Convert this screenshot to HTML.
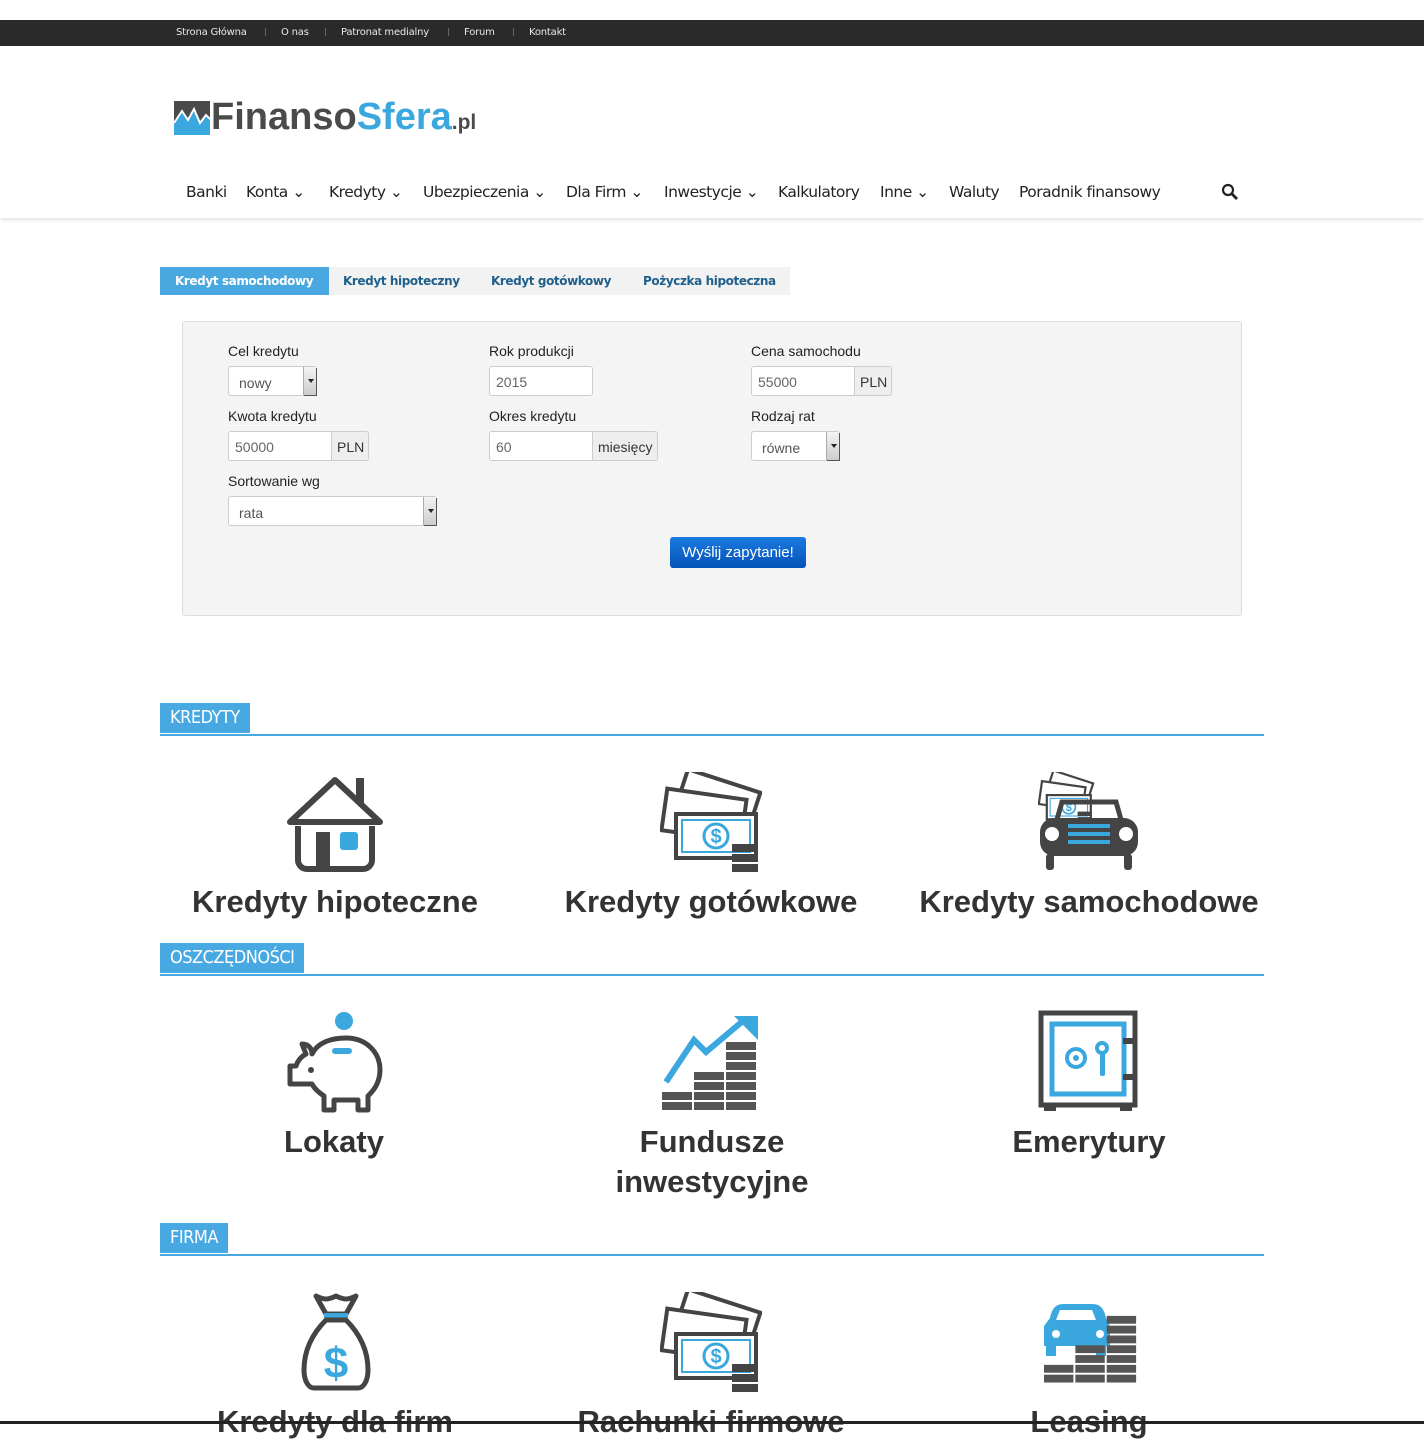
<!DOCTYPE html>
<html><head><meta charset="utf-8"><style>
*{margin:0;padding:0;box-sizing:border-box}
body{width:1424px;height:1424px;overflow:hidden;background:#fff;font-family:"Liberation Sans",sans-serif;position:relative}
.abs{position:absolute}
.top{top:20px;left:0;width:1424px;height:26px;background:#2a2a2a;color:#e8e8e8;font-size:10px;font-family:"DejaVu Sans",sans-serif;letter-spacing:-.2px}
.top span{position:absolute;top:7px}
.top i{position:absolute;top:8px;width:1px;height:8px;background:#666}
.hdr{top:46px;left:0;width:1424px;height:172px;background:#fff;box-shadow:0 2px 4px rgba(0,0,0,.12)}
.nav span{position:absolute;top:183px;font-size:15.5px;color:#222;font-family:"DejaVu Sans",sans-serif;letter-spacing:-.5px}
.tabs{top:267px;left:160px;width:630px;height:28px;background:#f2f2f2}
.tab{position:absolute;top:267px;height:28px;line-height:28px;font-size:12px;font-weight:bold;color:#1f5f8b;font-family:"DejaVu Sans",sans-serif;letter-spacing:-.4px}
.box{top:321px;left:182px;width:1060px;height:295px;background:#f4f4f4;border:1px solid #ddd;border-radius:3px}
.lbl{position:absolute;font-size:14px;color:#222}
.inp{position:absolute;height:30px;background:#fff;border:1px solid #ccc;border-radius:3px;font-size:14px;color:#666;padding:7px 6px}
.add{position:absolute;height:30px;background:#eee;border:1px solid #ccc;border-radius:0 3px 3px 0;font-size:14px;color:#333;padding:7px 5px}
.sel{position:absolute;height:30px;background:#fff;border:1px solid #ccc;border-radius:3px;font-size:14px;color:#555;padding:8px 10px}
.sel b{position:absolute;right:0;top:0;width:13px;height:28px;background:linear-gradient(#f4f4f4,#ccc);border-left:1px solid #aaa;box-shadow:1px 1px 0 #555}
.sel b:after{content:"";position:absolute;left:4px;top:12px;border:3px solid transparent;border-top:4px solid #222}
.btn{top:537px;left:670px;width:136px;height:31px;background:linear-gradient(#1a7be0,#0552b8);border-radius:3px;color:#fff;font-size:15px;text-align:center;line-height:31px}
.sec{position:absolute;left:160px;height:30px;background:#48a9e2;color:#fff;font-size:18px;line-height:30px;padding:0 10px;font-family:"DejaVu Sans Condensed","DejaVu Sans",sans-serif;letter-spacing:-.5px}
.line{position:absolute;left:160px;width:1104px;height:2px;background:#48a9e2}
.t{position:absolute;width:400px;text-align:center;font-size:31px;font-weight:bold;color:#333;line-height:40px}
svg{position:absolute}
</style></head><body>
<div class="abs top">
<span style="left:176px">Strona Główna</span><i style="left:265px"></i>
<span style="left:281px">O nas</span><i style="left:325px"></i>
<span style="left:341px">Patronat medialny</span><i style="left:448px"></i>
<span style="left:464px">Forum</span><i style="left:513px"></i>
<span style="left:529px">Kontakt</span>
</div>
<div class="abs hdr"></div>
<svg style="left:174px;top:101px" width="36" height="34" viewBox="0 0 36 34"><rect width="36" height="34" fill="#4a4a4a"/><path d="M0 34V22L8 10l6 9 6-11 6 14 6-8 4 4v16z" fill="#3aa8df"/><path d="M0 22L8 10l6 9 6-11 6 14 6-8 4 4" fill="none" stroke="#fff" stroke-width="2"/></svg>
<div class="abs" style="left:211px;top:96px;font-size:38px;font-weight:bold;letter-spacing:0;color:#4a4a4a">Finanso<span style="color:#3aa8df">Sfera</span><span style="font-size:21px">.pl</span></div>
<div class="nav">
<span style="left:186px">Banki</span><span style="left:246px">Konta ⌄</span><span style="left:329px">Kredyty ⌄</span><span style="left:423px">Ubezpieczenia ⌄</span><span style="left:566px">Dla Firm ⌄</span><span style="left:664px">Inwestycje ⌄</span><span style="left:778px">Kalkulatory</span><span style="left:880px">Inne ⌄</span><span style="left:949px">Waluty</span><span style="left:1019px">Poradnik finansowy</span>
</div>
<svg style="left:1221px;top:183px" width="18" height="18" viewBox="0 0 18 18"><circle cx="7" cy="7" r="5" fill="none" stroke="#222" stroke-width="2.2"/><path d="M11 11l5 5" stroke="#222" stroke-width="2.8"/></svg>
<div class="abs tabs"></div>
<div class="tab" style="left:160px;width:169px;background:#4aa8e0;color:#fff;padding-left:15px">Kredyt samochodowy</div>
<div class="tab" style="left:343px">Kredyt hipoteczny</div>
<div class="tab" style="left:491px">Kredyt gotówkowy</div>
<div class="tab" style="left:643px">Pożyczka hipoteczna</div>
<div class="abs box"></div>
<div class="lbl" style="left:228px;top:343px">Cel kredytu</div>
<div class="sel" style="left:228px;top:366px;width:89px">nowy<b></b></div>
<div class="lbl" style="left:489px;top:343px">Rok produkcji</div>
<div class="inp" style="left:489px;top:366px;width:104px">2015</div>
<div class="lbl" style="left:751px;top:343px">Cena samochodu</div>
<div class="inp" style="left:751px;top:366px;width:104px;border-radius:3px 0 0 3px">55000</div><div class="add" style="left:854px;top:366px;width:38px">PLN</div>
<div class="lbl" style="left:228px;top:408px">Kwota kredytu</div>
<div class="inp" style="left:228px;top:431px;width:104px;border-radius:3px 0 0 3px">50000</div><div class="add" style="left:331px;top:431px;width:38px">PLN</div>
<div class="lbl" style="left:489px;top:408px">Okres kredytu</div>
<div class="inp" style="left:489px;top:431px;width:104px;border-radius:3px 0 0 3px">60</div><div class="add" style="left:592px;top:431px;width:66px">miesięcy</div>
<div class="lbl" style="left:751px;top:408px">Rodzaj rat</div>
<div class="sel" style="left:751px;top:431px;width:89px">równe<b></b></div>
<div class="lbl" style="left:228px;top:473px">Sortowanie wg</div>
<div class="sel" style="left:228px;top:496px;width:209px">rata<b></b></div>
<div class="abs btn">Wyślij zapytanie!</div>

<svg width="0" height="0"><defs>
<g id="money"><g fill="#fff" stroke="#444" stroke-width="4"><rect x="20" y="8" width="76" height="40" transform="rotate(18 58 28)"/><rect x="4" y="22" width="80" height="42" transform="rotate(8 44 43)"/><rect x="16" y="42" width="80" height="44"/></g><rect x="22" y="48" width="68" height="32" fill="none" stroke="#3aa8df" stroke-width="2"/><circle cx="56" cy="64" r="12" fill="none" stroke="#3aa8df" stroke-width="3"/><text x="56" y="71" font-size="20" font-weight="bold" fill="#3aa8df" text-anchor="middle" font-family="Liberation Sans">$</text><g fill="#444"><rect x="72" y="72" width="26" height="8"/><rect x="72" y="82" width="26" height="8"/><rect x="72" y="92" width="26" height="8"/></g></g>
<g id="coins" fill="#555"><rect x="0" y="56" width="30" height="8"/><rect x="0" y="66" width="30" height="8"/><rect x="32" y="36" width="30" height="8"/><rect x="32" y="46" width="30" height="8"/><rect x="32" y="56" width="30" height="8"/><rect x="32" y="66" width="30" height="8"/><rect x="64" y="6" width="30" height="8"/><rect x="64" y="16" width="30" height="8"/><rect x="64" y="26" width="30" height="8"/><rect x="64" y="36" width="30" height="8"/><rect x="64" y="46" width="30" height="8"/><rect x="64" y="56" width="30" height="8"/><rect x="64" y="66" width="30" height="8"/></g>
</defs></svg>

<div class="sec" style="top:703px">KREDYTY</div><div class="line" style="top:734px"></div>
<svg style="left:286px;top:774px" width="98" height="98" viewBox="0 0 98 98"><path d="M12 52v34a9 9 0 0 0 9 9h56a9 9 0 0 0 9-9V52" fill="none" stroke="#444" stroke-width="6"/><path d="M4 48L49 6l45 42" fill="none" stroke="#444" stroke-width="6" stroke-linejoin="round" stroke-linecap="round"/><path d="M4 48h90" stroke="#444" stroke-width="6"/><rect x="70" y="4" width="8" height="26" fill="#444"/><rect x="30" y="58" width="14" height="37" fill="#444"/><rect x="54" y="58" width="18" height="18" rx="3" fill="#3aa8df"/></svg>
<div class="t" style="left:135px;top:882px">Kredyty hipoteczne</div>
<svg style="left:660px;top:772px" width="102" height="102" viewBox="0 0 102 102"><use href="#money"/></svg>
<div class="t" style="left:511px;top:882px">Kredyty gotówkowe</div>
<svg style="left:1038px;top:772px" width="102" height="102" viewBox="0 0 102 102"><g transform="translate(0,0) scale(.55)"><use href="#money"/></g><path d="M16 58l8-28h54l8 28" fill="none" stroke="#444" stroke-width="5"/><rect x="2" y="46" width="98" height="38" rx="14" fill="#444"/><circle cx="14" cy="62" r="7" fill="#fff"/><circle cx="88" cy="62" r="7" fill="#fff"/><rect x="30" y="52" width="42" height="4" fill="#3aa8df"/><rect x="30" y="60" width="42" height="4" fill="#3aa8df"/><rect x="30" y="68" width="42" height="4" fill="#3aa8df"/><rect x="8" y="82" width="8" height="16" rx="3" fill="#444"/><rect x="86" y="82" width="8" height="16" rx="3" fill="#444"/></svg>
<div class="t" style="left:889px;top:882px">Kredyty samochodowe</div>

<div class="sec" style="top:943px">OSZCZĘDNOŚCI</div><div class="line" style="top:974px"></div>
<svg style="left:284px;top:1010px" width="102" height="104" viewBox="0 0 102 104"><circle cx="60" cy="11" r="9" fill="#3aa8df"/><path d="M28 44C34 32 48 28 62 28c20 0 34 14 34 32 0 14-8 22-12 26v14h-10v-10h-24v10h-10V86c-6-4-10-8-12-12H6V56h6c2-6 6-10 10-12l-4-10c6 0 10 4 10 10z" fill="#fff" stroke="#444" stroke-width="5" stroke-linejoin="round"/><circle cx="27" cy="60" r="3" fill="#444"/><rect x="48" y="38" width="20" height="6" rx="3" fill="#3aa8df"/></svg>
<div class="t" style="left:134px;top:1122px">Lokaty</div>
<svg style="left:660px;top:1012px" width="104" height="100" viewBox="0 0 104 100"><path d="M6 70L34 28l12 12L84 8" fill="none" stroke="#3aa8df" stroke-width="6"/><path d="M74 4h24v24z" fill="#3aa8df"/><g transform="translate(2,24)"><use href="#coins"/></g></svg>
<div class="t" style="left:512px;top:1122px">Fundusze<br>inwestycyjne</div>
<svg style="left:1038px;top:1010px" width="102" height="104" viewBox="0 0 102 104"><rect x="3" y="3" width="94" height="92" fill="none" stroke="#444" stroke-width="5"/><rect x="14" y="14" width="72" height="70" fill="none" stroke="#3aa8df" stroke-width="5"/><rect x="85" y="28" width="14" height="6" fill="#444"/><rect x="85" y="64" width="14" height="6" fill="#444"/><circle cx="38" cy="48" r="9" fill="none" stroke="#3aa8df" stroke-width="4"/><circle cx="38" cy="48" r="3" fill="#3aa8df"/><circle cx="64" cy="38" r="5" fill="none" stroke="#3aa8df" stroke-width="4"/><rect x="62" y="42" width="5" height="24" rx="2" fill="#3aa8df"/><rect x="6" y="95" width="12" height="6" fill="#444"/><rect x="82" y="95" width="12" height="6" fill="#444"/></svg>
<div class="t" style="left:889px;top:1122px">Emerytury</div>

<div class="sec" style="top:1223px">FIRMA</div><div class="line" style="top:1254px"></div>
<svg style="left:300px;top:1290px" width="72" height="104" viewBox="0 0 72 104"><path d="M16 6c8 4 12 4 20 0 8 4 12 4 20 0l-10 18H26z" fill="none" stroke="#444" stroke-width="5" stroke-linejoin="round"/><rect x="24" y="23" width="24" height="5" fill="#3aa8df"/><path d="M26 30C12 44 4 60 4 80c0 10 4 18 10 18h44c6 0 10-8 10-18 0-20-8-36-22-50z" fill="#fff" stroke="#444" stroke-width="5"/><text x="36" y="88" font-size="44" font-weight="bold" fill="#3aa8df" text-anchor="middle" font-family="Liberation Sans">$</text></svg>
<div class="t" style="left:135px;top:1402px">Kredyty dla firm</div>
<svg style="left:660px;top:1292px" width="102" height="102" viewBox="0 0 102 102"><use href="#money"/></svg>
<div class="t" style="left:511px;top:1402px">Rachunki firmowe</div>
<svg style="left:1040px;top:1300px" width="100" height="90" viewBox="0 0 100 90"><path d="M10 18c2-10 6-14 14-14h28c8 0 12 4 14 14l4 8v20H4V26z" fill="#3aa8df"/><path d="M16 20l4-10h32l4 10z" fill="#fff"/><circle cx="16" cy="34" r="4" fill="#fff"/><circle cx="60" cy="34" r="4" fill="#fff"/><rect x="6" y="44" width="10" height="12" fill="#3aa8df"/><rect x="56" y="44" width="10" height="12" fill="#3aa8df"/><g transform="translate(4,10) scale(.98)"><use href="#coins"/></g></svg>
<div class="t" style="left:889px;top:1402px">Leasing</div>
<div class="abs" style="left:0;top:1421px;width:1424px;height:3px;background:#222"></div>
</body></html>
